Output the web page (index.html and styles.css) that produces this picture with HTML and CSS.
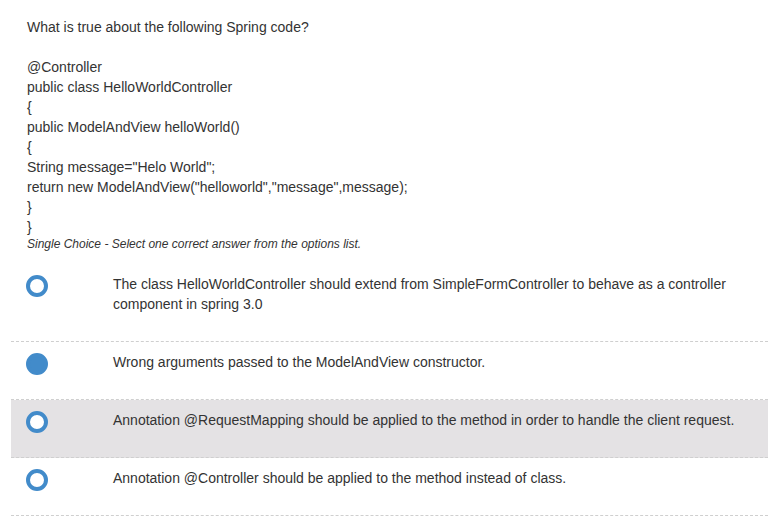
FILE: index.html
```html
<!DOCTYPE html>
<html>
<head>
<meta charset="utf-8">
<link rel="stylesheet" href="styles.css">
</head>
<body>
<div class="page">
  <div class="question">
    <div class="line">What is true about the following Spring code?</div>
    <div class="line">&nbsp;</div>
    <div class="line">@Controller</div>
    <div class="line">public class HelloWorldController</div>
    <div class="line">{</div>
    <div class="line">public ModelAndView helloWorld()</div>
    <div class="line">{</div>
    <div class="line">String message="Helo World";</div>
    <div class="line">return new ModelAndView("helloworld","message",message);</div>
    <div class="line">}</div>
    <div class="line">}</div>
  </div>
  <div class="hint">Single Choice - Select one correct answer from the options list.</div>
  <div class="options">
    <div class="option">
      <span class="radio"></span>
      <div class="text">The class HelloWorldController should extend from SimpleFormController to behave as a controller component in spring 3.0</div>
    </div>
    <div class="option">
      <span class="radio checked"></span>
      <div class="text">Wrong arguments passed to the ModelAndView constructor.</div>
    </div>
    <div class="option hover">
      <span class="radio"></span>
      <div class="text">Annotation @RequestMapping should be applied to the method in order to handle the client request.</div>
    </div>
    <div class="option">
      <span class="radio"></span>
      <div class="text">Annotation @Controller should be applied to the method instead of class.</div>
    </div>
  </div>
</div>
</body>
</html>
```
FILE: styles.css
```css
html, body {
  margin: 0;
  padding: 0;
  background: #fff;
}
body {
  font-family: "Liberation Sans", Arial, sans-serif;
  font-size: 14px;
  color: #333;
}
.page {
  padding-top: 17px;
}
.question {
  padding-left: 27px;
  line-height: 20px;
}
.hint {
  padding-left: 27px;
  font-size: 12px;
  font-style: italic;
  line-height: 15px;
  margin-bottom: 12px;
}
.options {
  margin-left: 11px;
}
.option {
  display: flex;
  align-items: flex-start;
  border-bottom: 1px dashed #cfcfcf;
  padding: 10px 20px 24px 0;
}
.option.hover {
  background: #e4e2e4;
}
.radio {
  flex: none;
  box-sizing: border-box;
  width: 22px;
  height: 22px;
  border: 4px solid #428bca;
  border-radius: 50%;
  margin: 1px 65px 0 15px;
  background: #fff;
}
.radio.checked {
  background: #428bca;
}
.text {
  line-height: 20px;
  margin-bottom: 3px;
  flex: 1;
}
```
